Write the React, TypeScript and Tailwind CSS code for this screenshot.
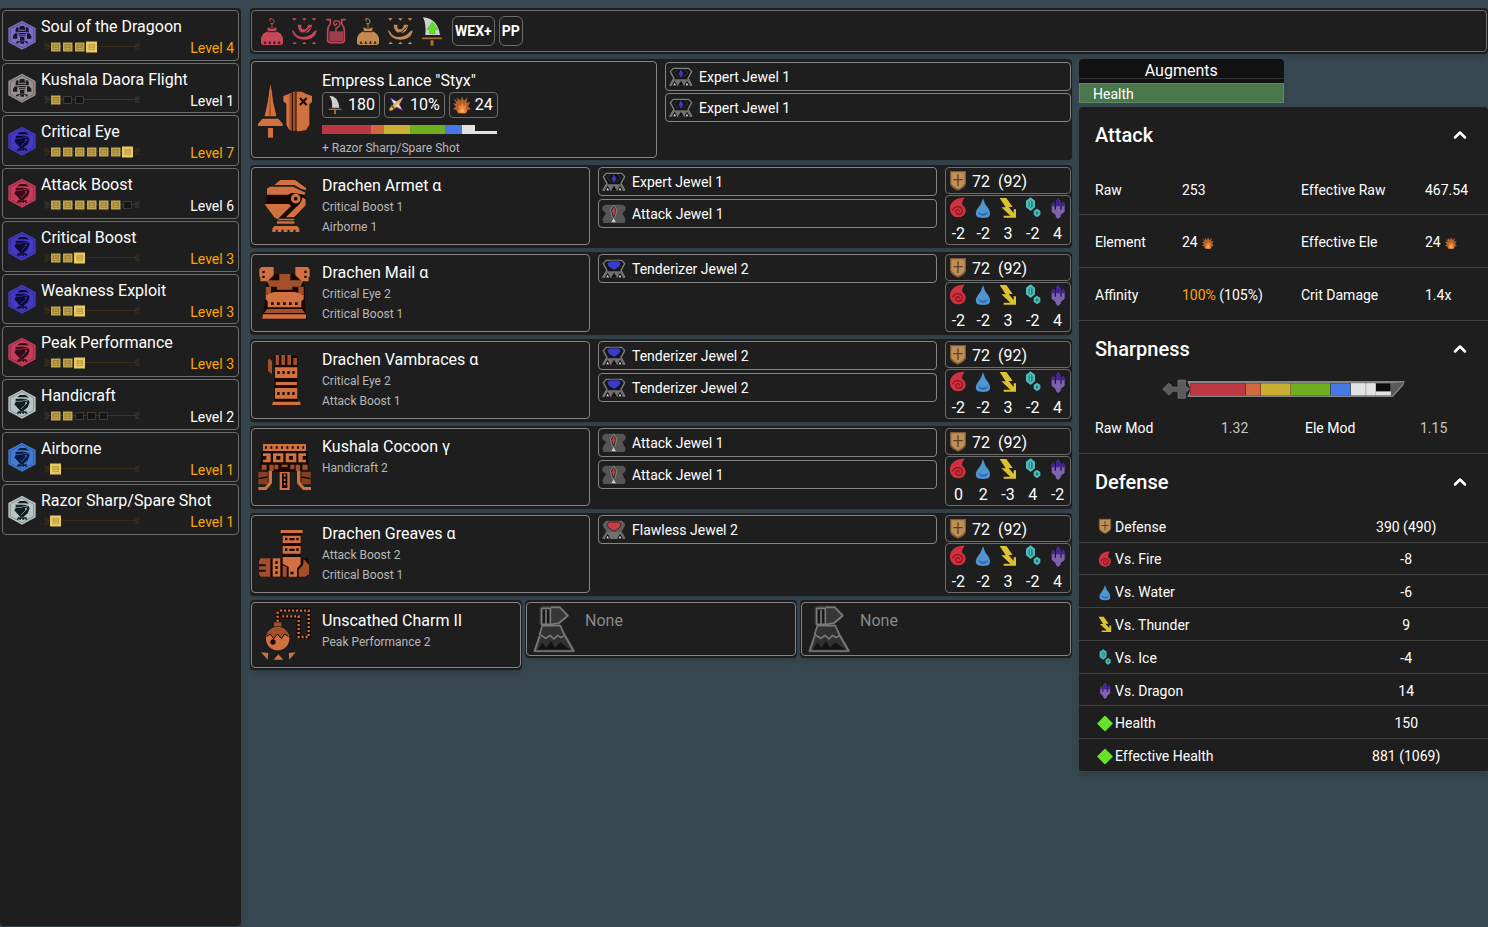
import type { ReactNode } from "react";
import { ChevronUp } from "lucide-react";

type Skill = { name: string; level: number; max: number; color: string; dark: string; set?: boolean };
type Res = [number, number, number, number, number];
type Armor = { name: string; skills: string[]; icon: ReactNode; jewels: string[]; res: Res };

/* ---------- small stat icons ---------- */

const ICON_SIZES = { md: "h-[22px] w-5", sm: "h-[17px] w-5" };
type IconSize = keyof typeof ICON_SIZES;

function ShieldIcon({ size = "md" }: { size?: IconSize }) {
  return (
    <svg viewBox="53 30 60 66" className={`${ICON_SIZES[size]} shrink-0`} aria-hidden="true">
      <path d="M59 33H107V72Q104 84 83 92Q62 84 59 72Z" fill="#7d5c38" />
      <path d="M63 37H103V70Q100 80 83 87Q66 80 63 70Z" fill="#c08f57" />
      <path d="M83 43V78M69 59H97" stroke="#5f4125" strokeWidth="4" />
    </svg>
  );
}

function FireIcon({ size = "md" }: { size?: IconSize }) {
  return (
    <svg viewBox="53 112 60 66" className={`${ICON_SIZES[size]} shrink-0`} aria-hidden="true">
      <path d="M104 114Q76 113 64 130Q56 142 60 156Q66 173 84 173Q102 172 106 156Q107 142 96 136Q93 124 104 114Z" fill="#d0313f" />
      <path d="M67 152Q70 141 84 141Q96 143 96 154Q94 164 84 164Q76 162 76 155Q78 149 84 150Q88 152 87 156" fill="none" stroke="#8d1622" strokeWidth="4" />
    </svg>
  );
}

function WaterIcon({ size = "md" }: { size?: IconSize }) {
  return (
    <svg viewBox="128 112 60 66" className={`${ICON_SIZES[size]} shrink-0`} aria-hidden="true">
      <path d="M158 116Q162 134 175 148Q182 160 177 170Q173 175 158 175Q143 175 139 170Q133 160 141 148Q154 134 158 116Z" fill="#4f95cf" />
      <path d="M144 156Q158 168 173 156Q172 167 158 168Q146 167 144 156Z" fill="#2f67b4" />
    </svg>
  );
}

function ThunderIcon({ size = "md" }: { size?: IconSize }) {
  return (
    <svg viewBox="204 112 60 66" className={`${ICON_SIZES[size]} shrink-0`} aria-hidden="true">
      <path d="M209 115H229L248 142H236L251 160V149H258V174H221V168H241L214 143H227Z" fill="#dcc22f" />
    </svg>
  );
}

function IceIcon({ size = "md" }: { size?: IconSize }) {
  return (
    <svg viewBox="278 112 60 66" className={`${ICON_SIZES[size]} shrink-0`} aria-hidden="true">
      <path d="M301 113L314 123V143L301 154L287 143V123Z" fill="#4fbcbc" />
      <path d="M301 121L307 127V140L301 146L295 140V127Z" fill="#1f7d80" />
      <path d="M300 124V142" stroke="#6fd3d0" strokeWidth="3" />
      <path d="M320 147L330 154V165L320 173L310 165V154Z" fill="#4fbcbc" />
      <path d="M320 154L325 159L320 166L315 160Z" fill="#1f7d80" />
    </svg>
  );
}

function DragonIcon({ size = "md" }: { size?: IconSize }) {
  return (
    <svg viewBox="353 112 60 66" className={`${ICON_SIZES[size]} shrink-0`} aria-hidden="true">
      <path d="M383 116L390 125V150H394V133L398 127L403 133V156L391 166V171L383 178L376 171V166L364 156V133L369 127L373 133V150H377V125Z" fill="#7d63ad" />
      <path d="M383 116L390 125V140H377V125ZM398 127L403 133V140H394V133ZM369 127L373 133V140H364V133Z" fill="#47209a" />
    </svg>
  );
}

function HealthIcon() {
  return (
    <svg viewBox="0 0 20 17" className="h-[17px] w-5 shrink-0" aria-hidden="true">
      <path d="M10 1.500L17 8.500L10 15.500L3 8.500Z" fill="#67e22c" stroke="#67e22c" strokeWidth="1.500" strokeLinejoin="round" />
    </svg>
  );
}

function BlastIcon({ className }: { className: string }) {
  return (
    <svg viewBox="617 282 60 62" className={className} aria-hidden="true">
      <path d="M622 292L634 304L632 290L642 300L647 288L653 300L664 290L660 306L672 304L665 317L673 326L663 329L660 338H634L631 329L620 325L629 318L620 308L630 309Z" fill="#b4622b" />
      <path d="M647 306L652 316L660 314L657 325L662 331L655 338H640L633 331L639 325L636 314L643 317Z" fill="#ef8534" />
      <path d="M648 322L653 330L648 338L642 330Z" fill="#ffb069" />
    </svg>
  );
}

function AttackIcon() {
  return (
    <svg viewBox="239 281 60 66" className="h-[22px] w-5" aria-hidden="true">
      <path d="M252 286Q278 286 282 322H260Q262 298 252 286Z" fill="#cfcfcf" />
      <path d="M250 327H289" stroke="#a06a37" strokeWidth="4" />
      <path d="M269 325V341" stroke="#a06a37" strokeWidth="6" />
    </svg>
  );
}

function AffinityIcon() {
  return (
    <svg viewBox="424 281 60 66" className="h-[22px] w-5" aria-hidden="true">
      <path d="M432 291L453 303L474 290L462 312L472 332L453 322L434 331L443 312Z" fill="#7b4bd6" />
      <path d="M437 296L455 306L460 312L455 319L447 313Z" fill="#f0f0f0" />
      <path d="M472 291L461 311L440 330L431 331L432 323L452 304Z" fill="#e2b558" />
      <path d="M436 314L448 327" stroke="#6b4620" strokeWidth="4" />
      <path d="M457 308L468 326L449 317Z" fill="#f4dcae" />
    </svg>
  );
}

/* ---------- gear icons ---------- */

const O = "#d0713f";
const OD = "#a34f2a";
const K = "#170805";

function Gear({ box, children }: { box: string; children: ReactNode }) {
  return (
    <svg viewBox={box} className="size-[60px] shrink-0 self-center" fill={O} aria-hidden="true">
      {children}
    </svg>
  );
}

const lanceIcon = (
  <Gear box="30 238 180 180">
    <path d="M76 246L81 268L86 305L96 348H57L67 305L72 268Z" stroke={K} strokeWidth="2" />
    <path d="M76 262L78 345H72Z" fill={OD} />
    <path d="M52 354H100L113 369V376H39V369Z" />
    <path d="M69 382H84V411H69Z" />
    <path d="M136 278L150 273H170L184 280L201 286V304L193 310V372L183 388L162 392L133 388L124 372V310L115 302V286Z" />
    <path d="M133 279L153 274V391L133 388Z" fill={OD} />
    <path d="M142 276V390M153 274V391" stroke={K} strokeWidth="3" />
    <path d="M165 292L185 313M185 292L165 313" stroke={K} strokeWidth="6" />
  </Gear>
);

const helmIcon = (
  <Gear box="30 48 180 180">
    <path d="M64 100H132L170 100L184 114L182 136L150 176H110L56 132L60 128H64Z" fill={K} />
    <path d="M88 75L106 60H150L183 84V91L168 86L148 75Z" />
    <path d="M66 104V86L74 80H144L182 98L178 104L160 101L140 98L130 104Z" />
    <path d="M58 132H132L138 138L98 178L88 172Z" />
    <circle cx="152" cy="116" r="10" fill="none" stroke={O} strokeWidth="9" />
    <path d="M172 112L182 118V136L148 172H118L150 140Q168 136 172 112Z" />
    <path d="M161 131L114 177" stroke={K} strokeWidth="4" />
    <path d="M122 176H148V181H96L104 176Z" />
    <path d="M96 184H148V191H96Z" />
    <path d="M88 198H156L163 206V216H152V209H145V216H134V209H127V216H116V209H109V216H98V209H92V216H82V206Z" />
  </Gear>
);

const mailIcon = (
  <Gear box="30 309 180 180">
    <path d="M70 342H168L180 380V425L185 478H52L60 425V380Z" fill={K} />
    <path d="M103 342H136V361H176L166 380H142V389H96V380H74L64 361H103Z" fill={OD} />
    <path d="M49 321H86V346L68 364H46V350H43V328Z" />
    <path d="M188 321H151V346L170 364H191V350H194V328Z" />
    <path d="M52 332H59V339H52ZM52 347H59V354H52ZM178 332H185V339H178ZM178 347H185V354H178Z" fill={K} />
    <path d="M62 380H78V402H66V407H62ZM176 380H160V402H172V407H176Z" fill={OD} />
    <path d="M78 399L88 396H150L160 399L176 406V418L169 424V442H68V424L62 418V406Z" />
    <path d="M78 427H86V435H78ZM96 427H104V435H96ZM114 427H122V435H114ZM132 427H140V435H132ZM150 427H158V435H150Z" fill={K} />
    <path d="M66 447H171L180 459H57Z" fill={OD} />
    <path d="M54 463H183V476H52Z" />
  </Gear>
);

const armIcon = (
  <Gear box="30 45 180 180">
    <path d="M88 62H158V205H88Z" fill={K} />
    <path d="M69 74L74 71L81 78V118L69 108ZM92 60H102V90H92ZM109 60H120V90H109ZM127 60H138V90H127ZM145 69H156V90H145Z" fill={OD} />
    <path d="M90 97H157V129H90ZM92 141H156V150H92ZM90 159H157V191H90ZM84 200H166V210H81Z" />
    <path d="M97 108H104V117H97ZM112 108H119V117H112ZM127 108H134V117H127ZM142 108H149V117H142ZM97 171H104V180H97ZM112 171H119V180H112ZM127 171H134V180H127ZM142 171H149V180H142Z" fill={K} />
  </Gear>
);

const waistIcon = (
  <Gear box="30 306 180 180">
    <path d="M54 327H183V350H188L192 400L160 410H78L44 400L50 350H54Z" fill={K} />
    <path d="M54 327H183V348H54Z" />
    <path d="M60 334H66V341H60ZM76 334H82V341H76ZM92 334H98V341H92ZM108 334H114V341H108ZM124 334H130V341H124ZM140 334H146V341H140ZM156 334H162V341H156ZM172 334H177V341H172Z" fill={K} />
    <path d="M54 355H77V382H54V374H64V363H54ZM183 355H160V382H183V374H173V363H183Z" />
    <path d="M84 355H115V382H84ZM122 355H154V382H122Z" />
    <path d="M94 363H106V374H94ZM132 363H144V374H132Z" fill={K} />
    <path d="M50 389H65V404H50ZM73 389H86V408H73ZM110 389H128V396H110ZM88 389H100V403H88ZM136 389H148V403H136ZM152 389H165V408H152ZM172 389H188V404H172Z" fill={OD} />
    <path d="M40 411H68V448H40ZM169 411H197V448H169Z" fill="#873f22" />
    <path d="M40 431L68 426M169 426L197 431" stroke={K} strokeWidth="4" />
    <path d="M71 408H81V445L64 465H40V456H60L71 442ZM166 408H156V445L174 465H198V456H178L166 442Z" />
    <path d="M104 411H134V465H104Z" />
    <path d="M111 415H127V459H111Z" fill={K} />
    <path d="M119 418V457" stroke={O} strokeWidth="5" strokeDasharray="7 6" />
  </Gear>
);

const legIcon = (
  <Gear box="30 57 180 180">
    <path d="M112 82H168V160H190L192 210L180 216H42V162H112Z" fill={K} />
    <path d="M107 75H173V84H107ZM113 92H167V114H113ZM113 123H167V146H113Z" />
    <path d="M120 98H127V106H120ZM133 99H149V106H133ZM154 98H161V106H154ZM120 130H127V138H120ZM133 131H149V138H133ZM154 130H161V138H154Z" fill={K} />
    <path d="M46 160H76V215H46L42 208V200H62V194H42V184H62V178H42V168Z" fill={OD} />
    <path d="M83 160H106V215H83Z" />
    <path d="M91 168H98V177H91ZM91 183H98V192H91ZM91 199H98V207H91Z" fill={K} />
    <path d="M113 156H167V178L156 190V215H131V186L113 176Z" />
    <path d="M113 180L125 186V215H113ZM176 162L192 180V208L180 215H161V194L174 180Z" fill={OD} />
    <path d="M136 200H146V208H136Z" fill={K} />
  </Gear>
);

const charmIcon = (
  <Gear box="30 300 180 180">
    <path d="M98 352V332L108 316H191V396H161V336H108" fill="none" stroke={K} strokeWidth="12" />
    <path d="M98 350V324L106 317H191V396H161V334H110" fill="none" stroke={O} strokeWidth="7" strokeDasharray="6 6" />
    <path d="M87 352H109V364H87Z" fill={OD} />
    <circle cx="98" cy="401" r="35" />
    <path d="M64 396Q68 368 98 367Q128 368 132 396L118 388L108 402L98 388L86 402L76 388Z" fill={OD} />
    <path d="M66 394L76 387L86 401L98 387L109 401L119 387L130 394" fill="none" stroke={K} strokeWidth="3" />
    <circle cx="84" cy="411" r="8" fill={K} />
    <path d="M48 442L70 444L68 464ZM152 442L131 444L133 464ZM100 448L115 464H86Z" />
  </Gear>
);

function MantleIcon() {
  return (
    <svg viewBox="29 552 144 144" className="size-12 shrink-0 self-center" aria-hidden="true" fill="none" stroke="#7a7a7a" strokeWidth="5" strokeLinejoin="round">
      <path d="M62 562L70 559H118L142 584L112 609L133 643L160 690H43L62 640L71 612L62 608Z" fill="#303030" stroke="#3b3b3b" strokeWidth="9" />
      <path d="M92 559H118L142 584L116 606L90 611" fill="#363636" />
      <path d="M64 562H90V610H64Z" fill="#171717" />
      <path d="M77 566V610" />
      <path d="M66 614H120L133 643L122 650L112 643L101 654L89 643L76 652L58 640Z" fill="#303030" />
      <path d="M58 644L43 690H160L134 645" fill="none" />
      <path d="M52 686L66 664L78 680L92 660L104 680L120 664L150 686Z" fill="#121212" stroke="none" />
    </svg>
  );
}

/* ---------- jewels ---------- */

function JewelIcon({ name }: { name: string }) {
  const cls = "h-5 w-6 shrink-0";
  if (name.startsWith("Attack")) {
    return (
      <svg viewBox="35 134 72 60" className={cls} aria-hidden="true">
        <path d="M36 142L45 136H97L106 142V152L96 162L106 180L103 191H39L36 180L47 162L36 152Z" fill="#555" />
        <path d="M70 137L80 152L73 176H67L60 152Z" fill="#2a2a2a" stroke="#8a8a8a" strokeWidth="3" />
        <path d="M70 142L76 155L70 169L65 155Z" fill="#d23a42" />
        <path d="M70 174L79 190H61Z" fill="#cfcfcf" stroke="#333" strokeWidth="2" />
      </svg>
    );
  }
  const red = name.startsWith("Flawless");
  return (
    <svg viewBox="35 37 72 60" className={cls} aria-hidden="true">
      <path d="M48 41H94L103 51L92 71L103 91H38L50 71L39 51Z" fill={red ? "#606060" : "#151515"} stroke={red ? "#606060" : "#808080"} strokeWidth="4" strokeLinejoin="round" />
      <path d="M36 94L50 74H91L105 94Z" fill="#707070" />
      {name.startsWith("Expert") ? (
        <>
          <path d="M60 44L50 54L63 68M81 44L92 54L78 68" fill="none" stroke="#4d4d4d" strokeWidth="2" />
          <path d="M71 44L78 57L71 70L64 57Z" fill="#3838c4" />
        </>
      ) : (
        <path d="M57 43H85L92 50L88 60L71 71L54 60L50 50Z" fill={red ? "#c93b46" : "#3a3acb"} stroke="#111" strokeWidth="2" />
      )}
      {!red && <path d="M71 78L80 93H62Z" fill="#101010" />}
      <path d="M52 78L60 93H43ZM89 78L98 93H81Z" fill="#101010" />
      <path d="M52 84L56 92H48ZM89 84L93 92H85Z" fill="#ddd" />
    </svg>
  );
}

function Jewel({ name }: { name: string }) {
  return (
    <button type="button" className="flex h-[29px] w-full items-center gap-1.5 rounded border border-[#858585] pl-[3px] text-left text-sm">
      <JewelIcon name={name} />
      {name}
    </button>
  );
}

/* ---------- skills sidebar ---------- */

function SkillIcon({ color, dark, set }: { color: string; dark: string; set?: boolean }) {
  return (
    <svg viewBox="23 61 84 90" className="h-[30px] w-7 shrink-0 self-center" aria-hidden="true">
      <path d="M65 63L106 85V128L65 150L24 128V85Z" fill={color} />
      <path d="M65 69L100 88V125L65 144L30 125V88Z" fill="none" stroke={dark} strokeOpacity="0.45" strokeWidth="2" />
      {set ? (
        <g fill={dark}>
          <path d="M59 79H72L75 90H56ZM50 82L55 84L54 98H46V88ZM81 82L76 84L77 98H85V88Z" />
          <path d="M55 93H76V97H55ZM54 100H77V104H54ZM56 107H75V110H56ZM59 112H72V123H59Z" />
          <path d="M44 101H51V117H38V109ZM87 101H80V117H93V109Z" />
          <path d="M50 125H80L84 131H76V127H71V132H60V127H55V131H46Z" />
        </g>
      ) : (
        <g fill={dark}>
          <path d="M52 84L59 79H76L86 87L74 86H52ZM46 90H72L84 94L88 101L82 116L69 127H60L42 107L46 101Z" />
          <path d="M46 98H66L70 94L82 97" fill="none" stroke={color} strokeWidth="2" />
          <circle cx="77" cy="103" r="3" fill={color} />
          <path d="M77 106L62 121" stroke={color} strokeWidth="2" />
          <path d="M53 128H78L81 135H75V132H71V135H66V132H62V135H57V132H55V135H49Z" />
        </g>
      )}
    </svg>
  );
}

function LevelTrack({ level, max }: { level: number; max: number }) {
  const full = level === max;
  const line = full ? "#3b2e18" : "#353535";
  return (
    <svg viewBox="0 0 98 12" className="ml-0.5 mt-0.5 h-3 w-[98px]" aria-hidden="true">
      <path d="M5 5.500H93" stroke={line} strokeWidth="1" />
      <path d="M1 2L6 4M1 5L5 5M1 9L6 7M3 2V10M5 3V9M97 2L92 4M97 9L92 7M95 2V9M93 3V9M97 5H92" stroke={line} strokeWidth="1" />
      {Array.from({ length: max }, (_, i) => {
        const x = 8 + i * 12;
        if (i >= level) {
          return <path key={i} d={`M${x + 0.5} 2.500H${x + 8.5}V9.500H${x + 0.5}Z`} fill="#151515" stroke="#3c3c3c" />;
        }
        const top = full && i === max - 1;
        return (
          <g key={i}>
            {top ? <rect x={x - 1} y="0.500" width="11" height="11" fill="#e6cb60" /> : <rect x={x} y="1.500" width="9.500" height="9" fill="#c2a650" />}
            <rect x={x + 1.5} y="3" width="6.500" height="6" fill={top ? "#c4a246" : "#a38735"} />
            <path d={`M${x + 2.5} 7.500H${x + 7}M${x + 3} 5H${x + 6.5}`} stroke={top ? "#ddc26a" : "#c2a958"} />
          </g>
        );
      })}
    </svg>
  );
}

const BLUE = { color: "#443bc4", dark: "#0c0a37" };
const RED = { color: "#c53d5a", dark: "#360a17" };
const WHITE = { color: "#b9c4c4", dark: "#101d20" };

const SKILLS: Skill[] = [
  { name: "Soul of the Dragoon", level: 4, max: 4, color: "#7d6dc0", dark: "#17142e", set: true },
  { name: "Kushala Daora Flight", level: 1, max: 3, color: "#969090", dark: "#1c1a1a", set: true },
  { name: "Critical Eye", level: 7, max: 7, ...BLUE },
  { name: "Attack Boost", level: 6, max: 7, ...RED },
  { name: "Critical Boost", level: 3, max: 3, ...BLUE },
  { name: "Weakness Exploit", level: 3, max: 3, ...BLUE },
  { name: "Peak Performance", level: 3, max: 3, ...RED },
  { name: "Handicraft", level: 2, max: 5, ...WHITE },
  { name: "Airborne", level: 1, max: 1, color: "#427ad4", dark: "#0a1b3c" },
  { name: "Razor Sharp/Spare Shot", level: 1, max: 1, ...WHITE },
];

function SkillCard({ skill }: { skill: Skill }) {
  return (
    <li className="flex gap-[5px] rounded border border-[#6c6c6c] pl-[5px] pr-1">
      <SkillIcon color={skill.color} dark={skill.dark} set={skill.set} />
      <div className="min-w-0 flex-1 pt-1">
        <div className="truncate text-base leading-6">{skill.name}</div>
        <div className="flex justify-between leading-[18px]">
          <LevelTrack level={skill.level} max={skill.max} />
          <span className={skill.level === skill.max ? "text-sm leading-[18px] text-[#ffa500]" : "text-sm leading-[18px]"}>Level {skill.level}</span>
        </div>
      </div>
    </li>
  );
}

/* ---------- buff bar ---------- */

function BuffButton({ label, box, color, children }: { label: string; box: string; color?: string; children: ReactNode }) {
  return (
    <button type="button" aria-label={label} className="size-[30px]">
      <svg viewBox={box} className="size-[30px]" fill={color} stroke="none" aria-hidden="true">
        {children}
      </svg>
    </button>
  );
}

const seedShape = (
  <>
    <path d="M77 71Q89 73 88 63Q84 53 76 56Q72 61 79 64M82 69V84" fill="none" stroke="currentColor" strokeWidth="3" />
    <path d="M68 82Q82 90 96 82L94 94Q110 98 115 114V131L109 135H55L49 131V114Q54 98 70 94Z" />
    <path d="M69 95H95" stroke="#1e1e1e" strokeWidth="3" />
    <path d="M57 131L61 122L66 131ZM71 131L75 122L80 131ZM85 131L89 122L94 131ZM99 131L103 122L108 131Z" fill="#1e1e1e" />
  </>
);

const powderShape = (
  <>
    <path d="M142 55H156L149 62ZM172 55H186L179 62ZM201 55H215L208 62ZM143 132L150 125L157 132ZM172 132L179 125L186 132ZM201 132L208 125L215 132Z" />
    <path d="M141 89Q150 94 152 101Q166 116 190 108Q204 102 206 96L216 90Q214 118 178 119Q148 118 141 89Z" />
    <path d="M159 74H170Q168 88 178 88Q188 88 190 74H202Q200 98 180 99Q160 98 159 74Z" />
    <path d="M164 104Q186 98 198 82" fill="none" stroke="#1e1e1e" strokeWidth="3" />
  </>
);

function BuffBar() {
  return (
    <div className="rounded bg-[#1e1e1e] px-px py-0.5 shadow-md">
      <div className="flex items-center rounded border border-[#6c6c6c] px-[5px] py-[5px]">
        <div className="mr-[5px] flex gap-0.5">
          <BuffButton label="Might Seed" box="37 48 90 90" color="#c4475a">
            <g color="#c4475a">{seedShape}</g>
          </BuffButton>
          <BuffButton label="Demon Powder" box="133 48 90 90" color="#c4475a">
            {powderShape}
          </BuffButton>
          <BuffButton label="Demondrug" box="229 48 90 90" color="#c4475a">
            <path d="M245 59H257V72Q249 80 249 92V123L255 128H294L299 123V92Q299 80 291 72V59H303" fill="none" stroke="#c4475a" strokeWidth="5" />
            <path d="M254 94H295V124H254Z" fill="#9c3f4e" />
            <path d="M274 96V84Q286 82 286 70Q282 59 270 63Q264 70 270 76Q277 76 276 69" fill="none" stroke="#c4475a" strokeWidth="4" />
          </BuffButton>
          <BuffButton label="Adamant Seed" box="37 48 90 90" color="#c58a53">
            <g color="#c58a53">{seedShape}</g>
          </BuffButton>
          <BuffButton label="Hardshell Powder" box="133 48 90 90" color="#c58a53">
            {powderShape}
          </BuffButton>
          <BuffButton label="Affinity Sword" box="516 48 90 90">
            <path d="M534 52Q578 56 585 105H541Q544 72 534 52Z" fill="#cfcfcf" />
            <path d="M562 66L579 88H570V101H554V88H546Z" fill="#5be325" stroke="#3fae17" strokeWidth="1.500" />
            <path d="M531 115H591" stroke="#a5702f" strokeWidth="5" />
            <path d="M561 121V137" stroke="#a5702f" strokeWidth="9" />
          </BuffButton>
        </div>
        <div className="flex gap-1 text-sm font-bold">
          <button type="button" className="h-[30px] rounded-md border border-[#6c6c6c] px-0.5">WEX+</button>
          <button type="button" className="h-[30px] rounded-md border border-[#6c6c6c] px-0.5">PP</button>
        </div>
      </div>
    </div>
  );
}

/* ---------- equipment ---------- */

const ARMORS: Armor[] = [
  { name: "Drachen Armet α", skills: ["Critical Boost 1", "Airborne 1"], icon: helmIcon, jewels: ["Expert Jewel 1", "Attack Jewel 1"], res: [-2, -2, 3, -2, 4] },
  { name: "Drachen Mail α", skills: ["Critical Eye 2", "Critical Boost 1"], icon: mailIcon, jewels: ["Tenderizer Jewel 2"], res: [-2, -2, 3, -2, 4] },
  { name: "Drachen Vambraces α", skills: ["Critical Eye 2", "Attack Boost 1"], icon: armIcon, jewels: ["Tenderizer Jewel 2", "Tenderizer Jewel 2"], res: [-2, -2, 3, -2, 4] },
  { name: "Kushala Cocoon γ", skills: ["Handicraft 2"], icon: waistIcon, jewels: ["Attack Jewel 1", "Attack Jewel 1"], res: [0, 2, -3, 4, -2] },
  { name: "Drachen Greaves α", skills: ["Attack Boost 2", "Critical Boost 1"], icon: legIcon, jewels: ["Flawless Jewel 2"], res: [-2, -2, 3, -2, 4] },
];

const RES_ICONS = [FireIcon, WaterIcon, ThunderIcon, IceIcon, DragonIcon];

function GearText({ name, skills = [] }: { name: string; skills?: string[] }) {
  return (
    <span className="block pt-[7px]">
      <span className="block text-base leading-[22px]">{name}</span>
      {skills.map((s) => (
        <span key={s} className="block text-xs leading-5 text-[#b8b8b8]">
          {s}
        </span>
      ))}
    </span>
  );
}

function Chip({ icon, children }: { icon: ReactNode; children: ReactNode }) {
  return (
    <span className="flex h-[26px] items-center gap-[3px] rounded border border-[#6c6c6c] pl-0.5 pr-1">
      {icon}
      {children}
    </span>
  );
}

function WeaponRow() {
  return (
    <div className="grid grid-cols-2 gap-2 rounded bg-[#1e1e1e] px-px py-0.5 shadow-md">
      <button type="button" className="flex h-[97px] gap-[7px] rounded border border-[#858585] pl-[3px] text-left">
        {lanceIcon}
        <span className="block pt-2">
          <span className="block text-base leading-[22px]">Empress Lance "Styx"</span>
          <span className="flex gap-1">
            <Chip icon={<AttackIcon />}>180</Chip>
            <Chip icon={<AffinityIcon />}>10%</Chip>
            <Chip icon={<BlastIcon className="h-[22px] w-5" />}>24</Chip>
          </span>
          <span className="mt-[7px] flex h-[9px]">
            <span className="w-[49px] bg-[#be3844]" />
            <span className="w-[13px] bg-[#d3683f]" />
            <span className="w-[26px] bg-[#c9b033]" />
            <span className="w-[35px] bg-[#6eae1f]" />
            <span className="w-[17px] bg-[#4678e6]" />
            <span className="w-[13px] bg-[#e2e2e2]" />
            <span className="h-[3px] w-[22px] self-end bg-[#e2e2e2]" />
          </span>
          <span className="mt-1 block text-xs leading-5 text-[#b8b8b8]">+ Razor Sharp/Spare Shot</span>
        </span>
      </button>
      <div className="flex flex-col gap-0.5 pt-px">
        <Jewel name="Expert Jewel 1" />
        <Jewel name="Expert Jewel 1" />
      </div>
    </div>
  );
}

function ArmorRow({ armor }: { armor: Armor }) {
  return (
    <div className="grid grid-cols-[1fr_1fr_126px] gap-2 rounded bg-[#1e1e1e] px-px pb-[3px] pt-0.5 shadow-md">
      <button type="button" className="flex h-[78px] gap-[7px] rounded border border-[#858585] pl-[3px] text-left">
        {armor.icon}
        <GearText name={armor.name} skills={armor.skills} />
      </button>
      <div className="flex flex-col gap-[3px]">
        {armor.jewels.map((j, i) => (
          <Jewel key={i} name={j} />
        ))}
      </div>
      <div className="flex flex-col gap-px">
        <div className="flex h-[27px] items-center gap-1 rounded border border-[#6c6c6c] pl-0.5">
          <ShieldIcon />
          <span className="whitespace-pre pt-0.5">72  (92)</span>
        </div>
        <div className="grid flex-1 grid-cols-5 rounded border border-[#6c6c6c]">
          {RES_ICONS.map((Icon, i) => (
            <div key={i} className="flex flex-col items-center gap-[5px] pt-px leading-5">
              <Icon />
              <span>{armor.res[i]}</span>
            </div>
          ))}
        </div>
      </div>
    </div>
  );
}

function SlotCard({ children, tall }: { children: ReactNode; tall?: boolean }) {
  return (
    <div className="rounded bg-[#1e1e1e] px-px py-0.5 shadow-md">
      <button
        type="button"
        className={
          tall
            ? "flex h-[66px] w-full gap-[7px] rounded border border-[#858585] pl-[3px] text-left"
            : "flex h-[54px] w-full gap-[7px] rounded border border-[#858585] pl-[3px] text-left text-[#8a8a8a]"
        }
      >
        {children}
      </button>
    </div>
  );
}

/* ---------- stats panel ---------- */

function SectionHeader({ title }: { title: string }) {
  return (
    <button type="button" className="flex h-14 w-full items-center justify-between px-4 text-xl font-medium">
      {title}
      <ChevronUp size={24} strokeWidth={3} className="p-0.5" />
    </button>
  );
}

function SharpnessBar() {
  return (
    <svg viewBox="260 147 732 60" className="h-5 w-[244px]" aria-hidden="true">
      <path d="M336 153H988L984 166L953 201H336L346 178Z" fill="#858585" />
      <path d="M345 160H947V196H345Z" fill="#0c0c0c" />
      <path d="M947 160L986 157L950 199H947Z" fill="#5a5a5a" />
      <path d="M262 177L280 160L288 165V171H308V150H331V168L344 177L331 187V205H308V184H288V190L280 195Z" fill="#5c5c5c" stroke="#747474" strokeWidth="2" />
      <path d="M345 160H511V196H345Z" fill="#be3844" />
      <path d="M512 160H556V196H512Z" fill="#d3683f" />
      <path d="M557 160H646V196H557Z" fill="#c9b033" />
      <path d="M647 160H765V196H647Z" fill="#6eae1f" />
      <path d="M766 160H825V196H766Z" fill="#4678e6" />
      <path d="M826 160H947V196H826Z" fill="#b0b0b0" />
      <path d="M827 160H870V196H827ZM873 160H900V196H873ZM902 184H946V196H902Z" fill="#e2e2e2" />
      <path d="M902 160H946V184H902Z" fill="#0c0c0c" />
    </svg>
  );
}

function AugmentsTable() {
  return (
    <table className="mb-1 w-1/2 border-separate border-spacing-0">
      <thead>
        <tr>
          <th className="rounded-t bg-[#121212] p-0 pb-1 text-base font-normal">
            <div className="h-5 border-b border-[#333] pt-0.5 leading-5">Augments</div>
          </th>
        </tr>
      </thead>
      <tbody>
        <tr>
          <td className="h-5 border border-[#5d8a5e] bg-[#4a764b] px-[13px] pb-0 pt-0.5 text-sm leading-4">Health</td>
        </tr>
      </tbody>
    </table>
  );
}

const cell = "border-b border-[#414141] pb-0 pl-4 pt-0.5";

function StatsPanel() {
  const blast = <BlastIcon className="ml-[3px] inline-block size-[14px]" />;
  const defense: [ReactNode, string, string][] = [
    [<ShieldIcon size="sm" />, "Defense", "390 (490)"],
    [<FireIcon size="sm" />, "Vs. Fire", "-8"],
    [<WaterIcon size="sm" />, "Vs. Water", "-6"],
    [<ThunderIcon size="sm" />, "Vs. Thunder", "9"],
    [<IceIcon size="sm" />, "Vs. Ice", "-4"],
    [<DragonIcon size="sm" />, "Vs. Dragon", "14"],
    [<HealthIcon />, "Health", "150"],
    [<HealthIcon />, "Effective Health", "881 (1069)"],
  ];
  return (
    <section className="rounded bg-[#1e1e1e] text-sm shadow-md">
      <SectionHeader title="Attack" />
      <table className="h-[158px] w-full table-fixed">
        <colgroup>
          <col className="w-[87px]" />
          <col className="w-[119px]" />
          <col className="w-[124px]" />
          <col />
        </colgroup>
        <tbody>
          <tr>
            <td className={cell}>Raw</td>
            <td className={cell}>253</td>
            <td className={cell}>Effective Raw</td>
            <td className={cell}>467.54</td>
          </tr>
          <tr>
            <td className={cell}>Element</td>
            <td className={cell}>24{blast}</td>
            <td className={cell}>Effective Ele</td>
            <td className={cell}>24{blast}</td>
          </tr>
          <tr>
            <td className={cell}>Affinity</td>
            <td className={cell}>
              <span className="text-[#ffa500]">100%</span> (105%)
            </td>
            <td className={cell}>Crit Damage</td>
            <td className={cell}>1.4x</td>
          </tr>
        </tbody>
      </table>
      <SectionHeader title="Sharpness" />
      <div className="flex h-6 items-center justify-center">
        <SharpnessBar />
      </div>
      <table className="h-[53px] w-full table-fixed">
        <colgroup>
          <col className="w-[126px]" />
          <col className="w-[84px]" />
          <col className="w-[115px]" />
          <col />
        </colgroup>
        <tbody>
          <tr>
            <td className={cell}>Raw Mod</td>
            <td className={`${cell} text-[#c8c8c8]`}>1.32</td>
            <td className={cell}>Ele Mod</td>
            <td className={`${cell} text-[#c8c8c8]`}>1.15</td>
          </tr>
        </tbody>
      </table>
      <SectionHeader title="Defense" />
      <table className="h-[262px] w-full table-fixed">
        <colgroup>
          <col className="w-3/5" />
          <col />
        </colgroup>
        <tbody>
          {defense.map(([icon, label, value]) => (
            <tr key={label}>
              <td className={cell}>
                <div className="flex items-center">
                  {icon}
                  {label}
                </div>
              </td>
              <td className="border-b border-[#414141] pb-0 pt-0.5 text-center">{value}</td>
            </tr>
          ))}
        </tbody>
      </table>
    </section>
  );
}

export default function App() {
  return (
    <div className="flex min-h-screen gap-[9px] bg-[#37474f] pb-px pt-2 font-[Roboto,sans-serif] text-white">
      <aside className="w-[241px] shrink-0 rounded bg-[#1e1e1e] p-0.5 shadow-md">
        <ul className="grid h-[525px] grid-rows-10 gap-0.5">
          {SKILLS.map((s) => (
            <SkillCard key={s.name} skill={s} />
          ))}
        </ul>
      </aside>
      <div className="flex min-w-0 flex-1 flex-col gap-[5px]">
        <BuffBar />
        <div className="grid grid-cols-[822fr_409fr] items-start gap-[7px]">
          <main className="flex flex-col gap-[5px]">
            <WeaponRow />
            <div className="flex flex-col gap-1">
              {ARMORS.map((a) => (
                <ArmorRow key={a.name} armor={a} />
              ))}
              <div className="grid grid-cols-3 items-start gap-[3px]">
                <SlotCard tall>
                  {charmIcon}
                  <GearText name="Unscathed Charm II" skills={["Peak Performance 2"]} />
                </SlotCard>
                {[0, 1].map((i) => (
                  <SlotCard key={i}>
                    <MantleIcon />
                    <GearText name="None" />
                  </SlotCard>
                ))}
              </div>
            </div>
          </main>
          <div>
            <AugmentsTable />
            <StatsPanel />
          </div>
        </div>
      </div>
    </div>
  );
}
